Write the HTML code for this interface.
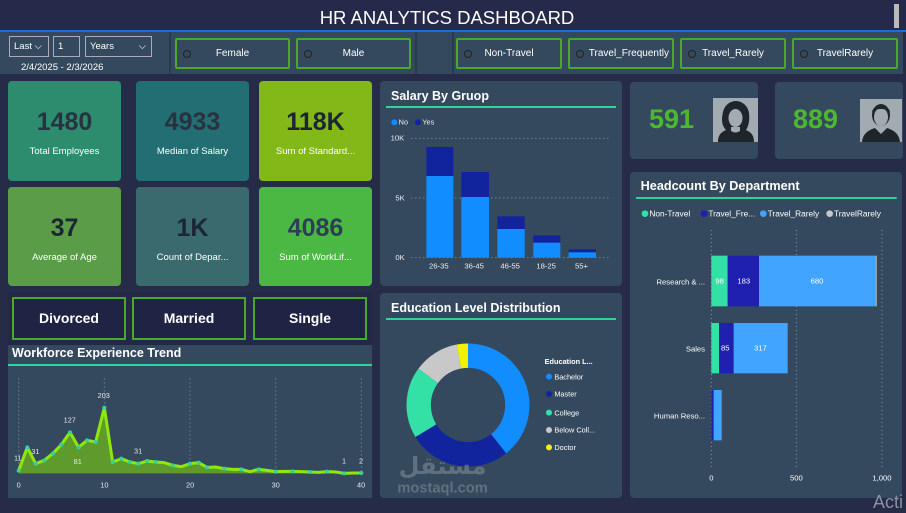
<!DOCTYPE html>
<html><head><meta charset="utf-8"><style>
*{margin:0;padding:0;box-sizing:border-box}
body{width:906px;height:506px;background:#262b48;font-family:"Liberation Sans",sans-serif;position:relative;overflow:hidden;color:#fff}
.a{position:absolute}
.p{position:absolute;background:#34495e;border-radius:4px}
.btn{position:absolute;border:2px solid #4aa82a;border-radius:2px;font-size:10px;color:#fff;text-align:center;line-height:27px;height:31px;top:38px;background:#34495e}
.btn i{position:absolute;left:6px;top:10px;width:8px;height:8px;border:1px solid #222;border-radius:50%}
.k{position:absolute;border-radius:4px;text-align:center}
.k b{display:block;font-size:25px;margin-top:27px;color:#2a3140}
.k span{display:block;font-size:9.5px;margin-top:9px;color:#fff}
.m{position:absolute;top:297px;height:43px;width:114px;background:#1f2444;border:2px solid #4aa82a;font-weight:bold;font-size:14px;text-align:center;line-height:39px}
.t{font-size:12.5px;font-weight:bold;position:absolute}
.ln{position:absolute;height:3px;background:#2fd39a}
.dd{position:absolute;top:36px;height:21px;border:1px solid #aab;font-size:9.5px;line-height:19px;padding-left:4px}
</style></head><body>
<div class="a" style="left:0;top:0;width:906px;height:30px;background:#252a4a"></div>
<div class="a" style="left:0;top:7px;width:894px;text-align:center;font-size:18.5px;color:#fff">HR ANALYTICS DASHBOARD</div>
<div class="a" style="left:894px;top:4px;width:5px;height:24px;background:#bbb"></div>
<div class="a" style="left:0;top:30px;width:906px;height:2px;background:#1a6fe0"></div>
<div class="a" style="left:0;top:32px;width:903px;height:42px;background:#34495e"></div>
<div class="a" style="left:169px;top:32px;width:2px;height:42px;background:#2a3a50"></div>
<div class="a" style="left:415px;top:32px;width:2px;height:42px;background:#2a3a50"></div>
<div class="a" style="left:452px;top:32px;width:2px;height:42px;background:#2a3a50"></div>
<div class="dd" style="left:9px;width:40px">Last ⌵</div>
<div class="dd" style="left:53px;width:27px">1</div>
<div class="dd" style="left:85px;width:67px">Years<span style="position:absolute;right:5px">⌵</span></div>
<div class="a" style="left:21px;top:62px;font-size:9.5px">2/4/2025 - 2/3/2026</div>
<div class="btn" style="left:175px;width:115px"><i></i>Female</div>
<div class="btn" style="left:296px;width:115px"><i></i>Male</div>
<div class="btn" style="left:456px;width:106px"><i></i>Non-Travel</div>
<div class="btn" style="left:568px;width:106px;text-align:right;padding-right:3px;overflow:hidden;white-space:nowrap"><i></i>Travel_Frequently</div>
<div class="btn" style="left:680px;width:106px"><i></i>Travel_Rarely</div>
<div class="btn" style="left:792px;width:106px"><i></i>TravelRarely</div>

<div class="k" style="left:8px;top:81px;width:113px;height:100px;background:#2e8c6e"><b>1480</b><span>Total Employees</span></div>
<div class="k" style="left:136px;top:81px;width:113px;height:100px;background:#236e72"><b>4933</b><span>Median of Salary</span></div>
<div class="k" style="left:259px;top:81px;width:113px;height:100px;background:#82b818"><b style="color:#1c2535">118K</b><span>Sum of Standard...</span></div>
<div class="k" style="left:8px;top:187px;width:113px;height:99px;background:#5a9c48"><b style="color:#1c2535">37</b><span>Average of Age</span></div>
<div class="k" style="left:136px;top:187px;width:113px;height:99px;background:#3b6a6e"><b style="color:#1c2535">1K</b><span>Count of Depar...</span></div>
<div class="k" style="left:259px;top:187px;width:113px;height:99px;background:#4bb844"><b style="color:#2e3e58">4086</b><span>Sum of WorkLif...</span></div>

<div class="a" style="left:8px;top:293px;width:364px;height:52px;background:#222846"></div>
<div class="m" style="left:12px">Divorced</div>
<div class="m" style="left:132px">Married</div>
<div class="m" style="left:253px">Single</div>

<div class="a" style="left:8px;top:345px;width:364px;height:153px;background:#34495e"></div>
<div class="t" style="left:12px;top:346px">Workforce Experience Trend</div>
<div class="ln" style="left:8px;top:364px;width:364px;height:2px"></div>
<svg class="a" style="left:0;top:280px" width="380" height="226" viewBox="0 0 1140 678">
<g stroke="#8a9aa8" stroke-width="3" stroke-dasharray="3 9"><line x1="56" y1="295" x2="56" y2="580"/><line x1="313" y1="295" x2="313" y2="580"/><line x1="570" y1="295" x2="570" y2="580"/><line x1="827" y1="295" x2="827" y2="580"/><line x1="1084" y1="295" x2="1084" y2="580"/></g>
<polygon fill="#5f9a2c" points="56,580 56,572 82,502 107,551 133,541 159,520 184,494 210,457 236,502 261,481 287,486 313,383 338,546 364,536 390,546 415,551 441,543 467,546 493,548 518,556 544,560 570,551 596,548 621,562 647,561 673,566 698,568 724,568 750,575 776,568 801,571 827,575 853,574 878,574 904,575 930,576 955,577 981,575 1007,576 1033,580 1058,579 1084,579 1084,580"/>
<polyline fill="none" stroke="#8fe80a" stroke-width="9" stroke-linejoin="round" points="56,572 82,502 107,551 133,541 159,520 184,494 210,457 236,502 261,481 287,486 313,383 338,546 364,536 390,546 415,551 441,543 467,546 493,548 518,556 544,560 570,551 596,548 621,562 647,561 673,566 698,568 724,568 750,575 776,568 801,571 827,575 853,574 878,574 904,575 930,576 955,577 981,575 1007,576 1033,580 1058,579 1084,579"/>
<g fill="#2fd3a0"><circle cx="56" cy="572" r="6"/><circle cx="82" cy="502" r="6"/><circle cx="107" cy="551" r="6"/><circle cx="133" cy="541" r="6"/><circle cx="159" cy="520" r="6"/><circle cx="184" cy="494" r="6"/><circle cx="210" cy="457" r="6"/><circle cx="236" cy="502" r="6"/><circle cx="261" cy="481" r="6"/><circle cx="287" cy="486" r="6"/><circle cx="313" cy="383" r="6"/><circle cx="338" cy="546" r="6"/><circle cx="364" cy="536" r="6"/><circle cx="390" cy="546" r="6"/><circle cx="415" cy="551" r="6"/><circle cx="441" cy="543" r="6"/><circle cx="467" cy="546" r="6"/><circle cx="518" cy="556" r="6"/><circle cx="570" cy="551" r="6"/><circle cx="596" cy="548" r="6"/><circle cx="621" cy="562" r="6"/><circle cx="673" cy="566" r="6"/><circle cx="724" cy="568" r="6"/><circle cx="776" cy="568" r="6"/><circle cx="827" cy="575" r="6"/><circle cx="878" cy="574" r="6"/><circle cx="930" cy="576" r="6"/><circle cx="981" cy="575" r="6"/><circle cx="1033" cy="580" r="6"/><circle cx="1084" cy="579" r="6"/></g>
<g fill="#e8e8e8" font-size="22" font-family="Liberation Sans"><text x="42" y="542">11</text><text x="94" y="522">31</text><text x="191" y="428">127</text><text x="221" y="552">81</text><text x="293" y="354">203</text><text x="402" y="521">31</text><text x="1026" y="551">1</text><text x="1077" y="551">2</text>
<text x="50" y="622">0</text><text x="301" y="622">10</text><text x="558" y="622">20</text><text x="815" y="622">30</text><text x="1071" y="622">40</text></g>
</svg>

<div class="p" style="left:380px;top:81px;width:242px;height:205px"></div>
<div class="t" style="left:391px;top:89px">Salary By Gruop</div>
<div class="ln" style="left:386px;top:106px;width:230px;height:2px"></div>
<svg class="a" style="left:378px;top:80px" width="250" height="210" viewBox="0 0 750 630">
<circle cx="49" cy="127" r="9" fill="#118dff"/><text x="62" y="134" font-size="22" fill="#eee" font-family="Liberation Sans">No</text>
<circle cx="120" cy="127" r="9" fill="#12239e"/><text x="133" y="134" font-size="22" fill="#eee" font-family="Liberation Sans">Yes</text>
<g stroke="#8a9aa8" stroke-width="3" stroke-dasharray="3 9"><line x1="100" y1="175" x2="695" y2="175"/><line x1="100" y1="354" x2="695" y2="354"/><line x1="100" y1="533" x2="695" y2="533"/></g>
<g font-size="23" fill="#eee" font-family="Liberation Sans"><text x="38" y="182">10K</text><text x="52" y="361">5K</text><text x="52" y="540">0K</text>
<text x="153" y="566">26-35</text><text x="259" y="566">36-45</text><text x="367" y="566">46-55</text><text x="475" y="566">18-25</text><text x="591" y="566">55+</text></g>
<g fill="#12239e"><rect x="145" y="201" width="81" height="90"/><rect x="250" y="276" width="83" height="78"/><rect x="358" y="409" width="82" height="40"/><rect x="466" y="466" width="81" height="24"/><rect x="572" y="508" width="82" height="11"/></g>
<g fill="#118dff"><rect x="145" y="288" width="81" height="245"/><rect x="250" y="351" width="83" height="182"/><rect x="358" y="447" width="82" height="86"/><rect x="466" y="488" width="81" height="45"/><rect x="572" y="517" width="82" height="16"/></g>
</svg>

<div class="p" style="left:380px;top:293px;width:242px;height:205px"></div>
<div class="t" style="left:391px;top:301px">Education Level Distribution</div>
<div class="ln" style="left:386px;top:318px;width:230px;height:2px"></div>
<svg class="a" style="left:378px;top:290px" width="250" height="216" viewBox="0 0 750 648">
<g transform="rotate(-90 270 345)" fill="none" stroke-width="73">
<circle cx="270" cy="345" r="148" stroke="#118dff" stroke-dasharray="365.5 564.4"/>
<circle cx="270" cy="345" r="148" stroke="#12239e" stroke-dasharray="250 679.9" stroke-dashoffset="-365.5"/>
<circle cx="270" cy="345" r="148" stroke="#33e0a6" stroke-dasharray="174.4 755.5" stroke-dashoffset="-615.5"/>
<circle cx="270" cy="345" r="148" stroke="#c8c8c8" stroke-dasharray="111 818.9" stroke-dashoffset="-789.9"/>
<circle cx="270" cy="345" r="148" stroke="#f2f200" stroke-dasharray="29 900.9" stroke-dashoffset="-900.9"/>
</g>
<g font-family="Liberation Sans" font-size="22" fill="#fff">
<text x="500" y="222" font-weight="bold">Education L...</text>
<circle cx="513" cy="260" r="9" fill="#118dff"/><text x="529" y="268">Bachelor</text>
<circle cx="513" cy="312" r="9" fill="#12239e"/><text x="529" y="320">Master</text>
<circle cx="513" cy="368" r="9" fill="#33e0a6"/><text x="529" y="376">College</text>
<circle cx="513" cy="420" r="9" fill="#c8c8c8"/><text x="529" y="428">Below Coll...</text>
<circle cx="513" cy="472" r="9" fill="#f2f200"/><text x="529" y="480">Doctor</text>
</g>
<g font-family="Liberation Sans,DejaVu Sans,sans-serif" fill="#8e989f" opacity="0.5" font-weight="bold">
<text x="62" y="552" font-size="72">مستقل</text>
<text x="58" y="608" font-size="44">mostaql.com</text></g>
</svg>

<div class="p" style="left:630px;top:82px;width:128px;height:77px"></div>
<div class="a" style="left:649px;top:104px;font-size:27px;font-weight:bold;color:#4bb830">591</div>
<svg class="a" style="left:713px;top:98px" width="45" height="44" viewBox="0 0 45 44"><rect width="45" height="44" fill="#a3abb2"/>
<path d="M5 44 C5 36 9 34 13 32 C9 28 8 22 10 14 C12 6 18 3 23 3 C28 3 35 7 36 15 C37 23 35 29 33 32 C37 34 41 36 41 44Z" fill="#1f252b"/>
<ellipse cx="22.5" cy="20" rx="7" ry="9" fill="#a3abb2"/><path d="M18 29 h9 v4 c-3 2 -6 2 -9 0Z" fill="#a3abb2"/></svg>

<div class="p" style="left:775px;top:82px;width:128px;height:77px"></div>
<div class="a" style="left:793px;top:104px;font-size:27px;font-weight:bold;color:#4bb830">889</div>
<svg class="a" style="left:860px;top:99px" width="42" height="43" viewBox="0 0 42 43"><rect width="42" height="43" fill="#a3abb2"/>
<ellipse cx="21" cy="16" rx="9" ry="11" fill="#1f252b"/><ellipse cx="21" cy="18" rx="7" ry="9" fill="#a3abb2"/><path d="M12 13 C13 5 29 5 30 13 C26 9 16 9 12 13Z" fill="#1f252b"/>
<path d="M2 43 C3 34 9 31 15 29 L21 35 L27 29 C33 31 39 34 40 43Z" fill="#1f252b"/></svg>

<div class="p" style="left:630px;top:172px;width:272px;height:326px"></div>
<svg class="a" style="left:620px;top:170px" width="286" height="336" viewBox="0 0 858 1008">
<text x="62" y="60" font-size="38" font-weight="bold" fill="#fff" font-family="Liberation Sans">Headcount By Department</text>
<rect x="48" y="81" width="782" height="6" fill="#2fd39a"/>
<g font-family="Liberation Sans" font-size="25" fill="#fff">
<circle cx="75" cy="131" r="10" fill="#33e0a6"/><text x="88" y="140">Non-Travel</text>
<circle cx="252" cy="131" r="10" fill="#2020b0"/><text x="265" y="140">Travel_Fre...</text>
<circle cx="430" cy="131" r="10" fill="#41a4ff"/><text x="443" y="140">Travel_Rarely</text>
<circle cx="629" cy="131" r="10" fill="#c8c8c8"/><text x="642" y="140">TravelRarely</text></g>
<g stroke="#8a9aa8" stroke-width="3" stroke-dasharray="3 9"><line x1="274" y1="180" x2="274" y2="900"/><line x1="529" y1="180" x2="529" y2="900"/><line x1="786" y1="180" x2="786" y2="900"/></g>
<rect x="274" y="257" width="49" height="152" fill="#33e0a6"/><rect x="323" y="257" width="94" height="152" fill="#2020b0"/><rect x="417" y="257" width="350" height="152" fill="#41a4ff"/><rect x="767" y="257" width="3" height="152" fill="#c8c8c8"/>
<rect x="274" y="459" width="23" height="151" fill="#33e0a6"/><rect x="297" y="459" width="44" height="151" fill="#2020b0"/><rect x="341" y="459" width="162" height="151" fill="#41a4ff"/>
<rect x="274" y="660" width="7" height="151" fill="#2020b0"/><rect x="281" y="660" width="24" height="151" fill="#41a4ff"/>
<g font-family="Liberation Sans" font-size="23" fill="#fff"><text x="286" y="341">98</text><text x="352" y="341">183</text><text x="572" y="341">680</text><text x="303" y="542">85</text><text x="402" y="542">317</text>
<text x="255" y="344" text-anchor="end">Research &amp; ...</text><text x="255" y="545" text-anchor="end">Sales</text><text x="255" y="746" text-anchor="end">Human Reso...</text>
<text x="274" y="932" text-anchor="middle">0</text><text x="529" y="932" text-anchor="middle">500</text><text x="786" y="932" text-anchor="middle">1,000</text></g>
</svg>
<div class="a" style="left:873px;top:492px;font-size:18px;color:#8a92a0">Acti</div>
</body></html>
